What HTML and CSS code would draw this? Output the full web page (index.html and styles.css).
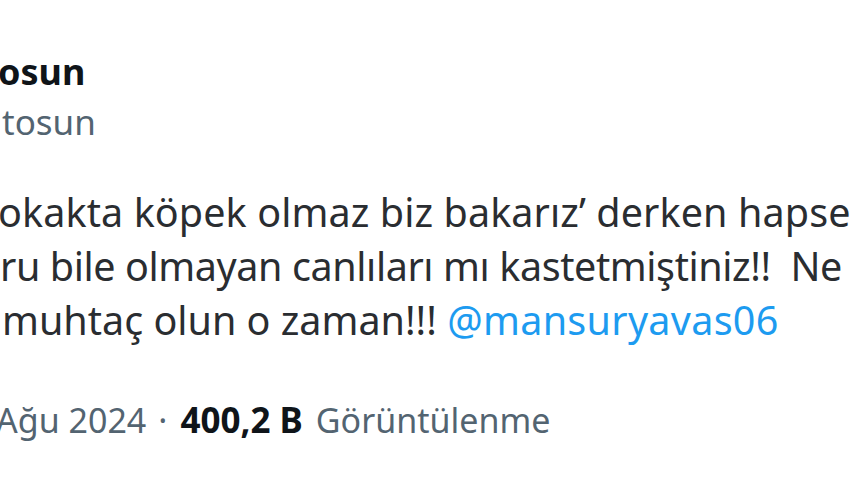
FILE: index.html
```html
<!DOCTYPE html>
<html lang="tr">
<head>
    <meta charset="UTF-8">
    <meta name="viewport" content="width=device-width, initial-scale=1.0">
    <title>Tweet</title>
    <link rel="stylesheet" href="styles.css">
</head>
<body>
    <div class="tweet">
        <div class="user">
            <div class="name">osun</div>
            <div class="handle">tosun</div>
        </div>

        <div class="text">
            <div class="line first">okakta köpek olmaz biz bakarız’ derken hapse</div>
            <div class="line second">ru bile olmayan canlıları mı kastetmiştiniz!!&nbsp; Ne</div>
            <div class="line">muhtaç olun o zaman!!! <a href="#">@mansuryavas06</a></div>
        </div>

        <div class="meta"><span class="date">Ağu 2024</span><span class="dot">·</span><b>400,2 B</b><span class="views">Görüntülenme</span></div>
    </div>
</body>
</html>
```

FILE: styles.css
```css
* {
    margin: 0;
    padding: 0;
    box-sizing: border-box;
}

body {
    background-color: #fff;
    font-family: "Noto Sans", "Open Sans", sans-serif;
    overflow: hidden;
    width: 850px;
    height: 478px;
}

.tweet {
    padding: 51px 0 0 2px;
    white-space: nowrap;
}

.name {
    font-size: 36px;
    line-height: 42px;
    font-weight: bold;
    color: #0f1419;
    text-indent: -4px;
}

.handle {
    margin-top: 8px;
    font-size: 35px;
    line-height: 42px;
    color: #536471;
}

.text {
    margin-top: 42px;
    font-size: 39.5px;
    line-height: 54px;
    color: #2a2d31;
}

.line.first {
    text-indent: -4px;
    letter-spacing: 0.1px;
}

.line.second {
    text-indent: -2px;
    letter-spacing: -0.4px;
}

.text a {
    color: #1d9bf0;
    text-decoration: none;
    letter-spacing: 0.3px;
}

.meta {
    margin-top: 51px;
    margin-left: -6px;
    font-size: 34px;
    line-height: 44px;
    color: #536471;
}

.meta .dot {
    margin: 0 13px 0 12px;
}

.meta b {
    font-size: 35px;
    color: #0f1419;
    margin-right: 13px;
}
```
